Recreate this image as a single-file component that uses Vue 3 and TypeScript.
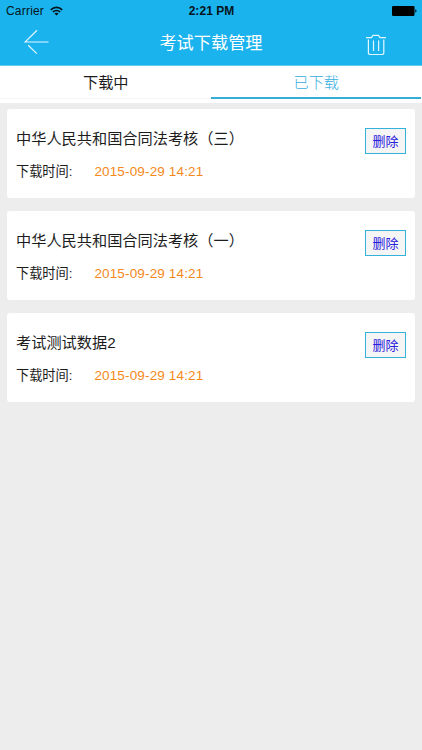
<script setup lang="ts">
import { ref } from 'vue'

interface Download {
  id: number
  title: string
  time: string
}

const tabs: string[] = ['下载中', '已下载']
const active = ref(1)
const downloads = ref<Download[]>([
  { id: 1, title: '中华人民共和国合同法考核（三）', time: '2015-09-29 14:21' },
  { id: 2, title: '中华人民共和国合同法考核（一）', time: '2015-09-29 14:21' },
  { id: 3, title: '考试测试数据2', time: '2015-09-29 14:21' },
])

function remove(id: number) {
  downloads.value = downloads.value.filter((d) => d.id !== id)
}
</script>

<template>
  <div class="screen">
    <header class="header">
      <div class="status">
        <div class="carrier">
          <span>Carrier</span>
          <svg class="wifi" width="13" height="10" viewBox="0 0 13 10" fill="none" stroke="#06141b" stroke-width="1.7">
            <path d="M0.8 3.8C4 0.6 9 0.6 12.2 3.8" />
            <path d="M2.9 6C5 4 8 4 10.1 6" />
            <path d="M6.5 9.5L4.4 7.5C5.7 6.4 7.3 6.4 8.6 7.5Z" fill="#06141b" stroke="none" />
          </svg>
        </div>
        <span class="clock">2:21 PM</span>
        <svg class="battery" width="25" height="10" viewBox="0 0 25 10">
          <rect x="0" y="0" width="22.5" height="10" rx="1.2" fill="#000" />
          <path d="M23.3 3.3C24.9 3.6 24.9 6.4 23.3 6.7Z" fill="#000" />
        </svg>
      </div>
      <div class="navbar">
        <svg class="back" width="26" height="26" viewBox="0 0 26 26" fill="none" stroke="#e4f7ff" stroke-width="1.2">
          <path d="M13 1.2L1 13H24.5M4.2 16.2L12.8 24.6" />
        </svg>
        <h1 class="heading">考试下载管理</h1>
        <svg class="trash" width="22" height="22" viewBox="0 0 22 22" fill="none" stroke="#e4f7ff" stroke-width="1.2">
          <path d="M1 3.6H6.5L8 1.4H13.5L15 3.6H21" />
          <path d="M3.4 5.4V18.4Q3.4 20.5 5.4 20.5H16.8Q18.8 20.5 18.8 18.4V5.4" />
          <path d="M8.5 6.5V17M13.6 6.5V17" />
        </svg>
      </div>
    </header>

    <nav class="tabs">
      <button
        v-for="(tab, i) in tabs"
        :key="tab"
        class="tab"
        :class="{ active: active === i }"
        @click="active = i"
      >
        {{ tab }}
      </button>
    </nav>

    <main class="list">
      <article v-for="item in downloads" :key="item.id" class="card">
        <div class="info">
          <h2 class="title">{{ item.title }}</h2>
          <p class="meta">
            <span class="label">下载时间:</span>
            <span class="time">{{ item.time }}</span>
          </p>
        </div>
        <button class="delete" @click="remove(item.id)">删除</button>
      </article>
    </main>
  </div>
</template>

<style>
body {
  margin: 0;
  background: #ededed;
}
</style>

<style scoped>
.screen {
  box-sizing: border-box;
  width: 100%;
  height: 750px;
  overflow: hidden;
  background: #ededed;
  font-family: "Liberation Sans", "Noto Sans CJK SC", sans-serif;
  color: #1c1c1c;
}
button {
  font-family: inherit;
  padding: 0;
  margin: 0;
}
.header {
  box-sizing: border-box;
  height: 66px;
  background: #1ab3ee;
  border-bottom: 1px solid #62c8ee;
}
.status {
  display: grid;
  grid-template-columns: 1fr auto 1fr;
  align-items: center;
  height: 22px;
  padding: 0 5px 0 6px;
  font-size: 12px;
  line-height: 22px;
  color: #06141b;
}
.carrier {
  display: flex;
  align-items: center;
  gap: 6px;
  letter-spacing: 0.2px;
}
.clock {
  font-weight: bold;
  letter-spacing: 0.05px;
}
.battery {
  justify-self: end;
}
.navbar {
  display: grid;
  grid-template-columns: 1fr auto 1fr;
  align-items: center;
  height: 42px;
  padding: 0 35px 0 24px;
}
.back {
  margin-top: -2px;
}
.heading {
  margin: 0 0 0 11px;
  font-size: 17.2px;
  line-height: 24px;
  font-weight: 400;
  color: #fff;
}
.trash {
  justify-self: end;
  margin-top: 3px;
}
.tabs {
  display: flex;
  height: 37px;
  background: #fff;
}
.tab {
  box-sizing: border-box;
  flex: 1;
  height: 33px;
  padding: 1px 0 0 1px;
  border: 0;
  border-bottom: 1px solid #f5f5f5;
  background: none;
  font-size: 15.2px;
  line-height: 32px;
  color: #1c1c1c;
}
.tab.active {
  margin: 0 1px 0 0;
  border-bottom: 2px solid #34aed6;
  line-height: 31px;
  color: #35aee0;
  font-weight: 300;
}
.list {
  display: flex;
  flex-direction: column;
  gap: 13px;
  padding: 6.4px 7px;
}
.card {
  box-sizing: border-box;
  display: flex;
  justify-content: space-between;
  align-items: flex-start;
  height: 89px;
  padding: 19px 9px 0 9px;
  border-radius: 3px;
  background: #fff;
}
.title {
  margin: 0;
  font-size: 15.2px;
  line-height: 22px;
  font-weight: 400;
  white-space: nowrap;
}
.meta {
  display: flex;
  margin: 12px 0 0;
  line-height: 20px;
}
.label {
  width: 78.4px;
  font-size: 13.2px;
}
.time {
  font-size: 13.5px;
  letter-spacing: 0.15px;
  color: #f5881a;
}
.delete {
  box-sizing: border-box;
  width: 41px;
  height: 26px;
  padding-top: 1px;
  border: 1px solid #35b2da;
  background: #f5f5f6;
  font-size: 13px;
  line-height: 23px;
  color: #2a20dc;
}
</style>
